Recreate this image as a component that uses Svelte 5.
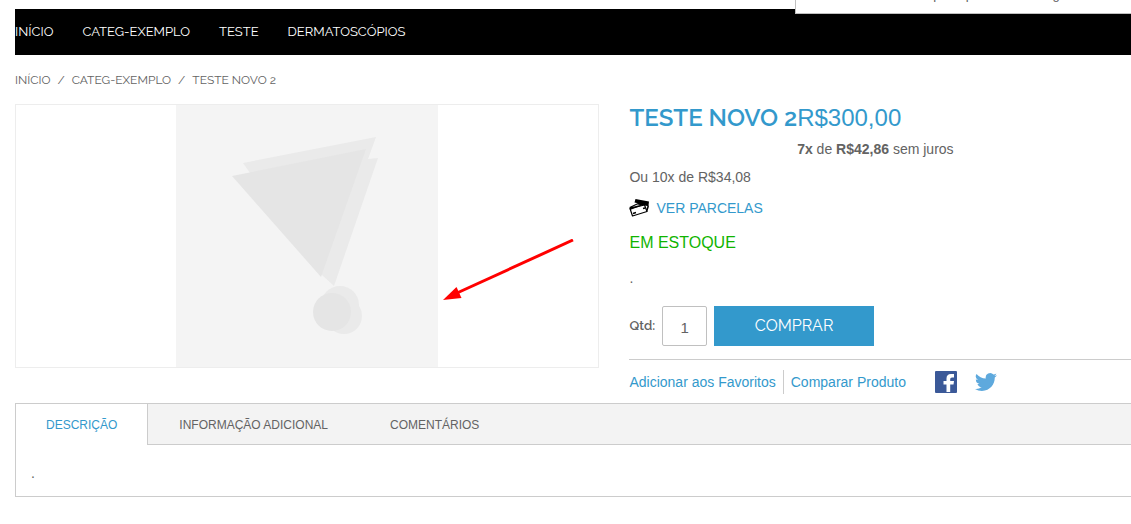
<script>
  const navLinks = ['Início', 'Categ-Exemplo', 'Teste', 'Dermatoscópios'];
  const tabs = ['Descrição', 'Informação Adicional', 'Comentários'];

  let activeTab = $state(0);
  let qty = $state('1');
</script>

<div class="page">
  <div class="notice">Sua sessão expirou por falta de carga</div>

  <nav class="main-nav">
    {#each navLinks as link}
      <a href="#top">{link}</a>
    {/each}
  </nav>

  <ul class="breadcrumbs">
    <li><a href="#top">Início</a></li>
    <li><a href="#top">Categ-Exemplo</a></li>
    <li>Teste Novo 2</li>
  </ul>

  <main class="product">
    <div class="gallery">
      <svg class="placeholder" viewBox="0 0 262 262" role="img" aria-label="Teste Novo 2">
        <rect width="262" height="262" fill="#f4f4f4" />
        <path d="M67 58 200 32 192 54 202 53 158 181 146 170Z" fill="#eaeaea" />
        <path d="M56 71 190 44 145 172Z" fill="#e5e5e5" />
        <circle cx="164" cy="200" r="19" fill="#eaeaea" />
        <circle cx="168" cy="211" r="18" fill="#eaeaea" />
        <circle cx="156" cy="207" r="19" fill="#e5e5e5" />
      </svg>
      <svg class="arrow" viewBox="0 0 132 62" aria-hidden="true">
        <path d="M130 1 14 54" stroke="#f00" stroke-width="3" />
        <path d="M0 61 13.500 48 18.500 59Z" fill="#f00" />
      </svg>
    </div>

    <section class="details">
      <div class="heading">
        <h1>Teste Novo 2</h1>
        <div class="price-box">
          <div class="price">R$300,00</div>
          <p><strong>7x</strong> de <strong>R$42,86</strong> sem juros</p>
        </div>
      </div>

      <p class="alternative">Ou 10x de R$34,08</p>

      <a class="installments" href="#parcelas">
        <svg viewBox="0 0 20 18" aria-hidden="true">
          <path d="M6.500 0 20 2.500 19.500 6.500 5.500 3.500Z" fill="#000" />
          <path d="M9 5 17.500 6Q19.500 6.500 19 8L17.500 12.500" fill="none" stroke="#000" stroke-width="1.500" />
          <path d="M1 9.500 15.500 6 18 12.500 3.500 17Z" fill="#fff" stroke="#000" stroke-width="1.200" stroke-linejoin="round" />
          <path d="M.5 8 10 3.500 15.500 5.500 1 11Z" fill="#000" />
          <path d="M3 8 8.500 5.500 11 6Z" fill="#fff" />
          <path d="M4 14.500 7 13.500M14 9.500l2-.500" stroke="#000" stroke-width="1.400" />
        </svg>
        Ver parcelas
      </a>

      <p class="stock">Em estoque</p>
      <p class="summary">.</p>

      <form class="buy" onsubmit={(e) => e.preventDefault()}>
        <label for="qty">Qtd:</label>
        <input id="qty" type="text" bind:value={qty} />
        <button type="submit">Comprar</button>
      </form>

      <div class="sharing">
        <a href="#favoritos">Adicionar aos Favoritos</a>
        <a class="compare" href="#comparar">Comparar Produto</a>
        <a class="social" href="#facebook" aria-label="Facebook">
          <svg viewBox="0 0 22 22">
            <rect width="22" height="22" rx="1" fill="#3b5998" />
            <path d="M11.500 21V13.500H8.500V10H11.500V7.500Q11.500 3 16 3H19V6.500H17Q15.200 6.500 15.200 8V10H19L18.500 13.500H15.200V21Z" fill="#fff" />
          </svg>
        </a>
        <a class="social" href="#twitter" aria-label="Twitter">
          <svg viewBox="0 0 24 24">
            <path fill="#5ea9dd" d="M23.950 4.570a10 10 0 0 1-2.820.770 4.960 4.960 0 0 0 2.160-2.720c-.950.560-2 .960-3.130 1.180a4.920 4.920 0 0 0-8.380 4.480C7.690 8.090 4.070 6.130 1.640 3.160a4.920 4.920 0 0 0 1.520 6.570 4.900 4.900 0 0 1-2.230-.610v.060a4.920 4.920 0 0 0 3.950 4.830 5 5 0 0 1-2.210.080 4.940 4.940 0 0 0 4.600 3.420A9.870 9.870 0 0 1 0 19.540a14 14 0 0 0 7.550 2.210c9.050 0 14-7.500 14-13.980l-.020-.630a9.940 9.940 0 0 0 2.420-2.570z" />
          </svg>
        </a>
      </div>
    </section>
  </main>

  <section class="collateral">
    <div class="tabs" role="tablist">
      {#each tabs as tab, i}
        <button role="tab" aria-selected={activeTab === i} class:active={activeTab === i} onclick={() => (activeTab = i)}>
          {tab}
        </button>
      {/each}
    </div>
    <div class="tab-content" role="tabpanel">.</div>
  </section>
</div>

<style>
  :global(body) {
    margin: 0;
    background: #fff;
    overflow-x: hidden;
  }

  .page {
    position: relative;
    padding: 9px 0 27px 15px;
    font-family: 'Liberation Sans', Arial, sans-serif;
    font-size: 14px;
    line-height: 20px;
    color: #636363;
  }

  h1, p, ul {
    margin: 0;
    padding: 0;
  }

  a {
    color: #3399cc;
    text-decoration: none;
  }

  /* Bottom edge of the message box that hangs over the menu */
  .notice {
    position: absolute;
    top: -30px;
    left: 795px;
    right: 0;
    height: 44px;
    box-sizing: border-box;
    padding: 16px 0 0 52px;
    border: 1px solid #c0c0c0;
    border-right: 0;
    background: #fff;
    font-size: 13px;
    line-height: 16px;
    white-space: nowrap;
  }

  .main-nav {
    display: flex;
    gap: 29px;
    background: #000;
    font-family: Raleway, Lato, sans-serif;
    font-size: 13px;
    line-height: 46px;
    text-transform: uppercase;
  }

  .main-nav a {
    color: #fff;
  }

  .breadcrumbs {
    display: flex;
    padding: 15px 0 14px;
    list-style: none;
    font-family: Raleway, Lato, sans-serif;
    font-size: 12px;
    text-transform: uppercase;
  }

  .breadcrumbs a {
    color: #636363;
  }

  .breadcrumbs li + li::before {
    content: '/';
    margin: 0 7px;
  }

  .product {
    display: grid;
    grid-template-columns: 585fr 502fr;
    column-gap: 30px;
    align-items: start;
  }

  .gallery {
    position: relative;
    display: flex;
    justify-content: center;
    border: 1px solid #ededed;
  }

  .placeholder {
    width: 262px;
    height: 262px;
  }

  .arrow {
    position: absolute;
    left: calc(50% + 136px);
    top: 134px;
    width: 132px;
    height: 62px;
  }

  .heading {
    display: flex;
  }

  h1 {
    font-family: Raleway, Lato, sans-serif;
    font-size: 24px;
    font-weight: 600;
    line-height: 28px;
    color: #3399cc;
    text-transform: uppercase;
  }

  .price {
    margin-bottom: 7px;
    font-size: 24px;
    line-height: 28px;
    color: #3399cc;
  }

  .alternative {
    margin-top: 8px;
  }

  .installments {
    display: flex;
    align-items: center;
    gap: 7px;
    margin-top: 11px;
    text-transform: uppercase;
  }

  .installments svg {
    width: 20px;
    height: 20px;
  }

  .stock {
    margin-top: 15px;
    font-size: 16px;
    color: #11b400;
    text-transform: uppercase;
  }

  .summary {
    margin-top: 15px;
  }

  .buy {
    display: flex;
    align-items: center;
    margin-top: 18px;
    padding-bottom: 13px;
    border-bottom: 1px solid #cccccc;
  }

  .buy label {
    font-family: Raleway, Lato, sans-serif;
    font-size: 13px;
    font-weight: 600;
  }

  .buy input {
    box-sizing: border-box;
    width: 45px;
    height: 40px;
    margin: 0 7px;
    padding: 2px 0 0;
    border: 1px solid #c0c0c0;
    border-radius: 2px;
    font-family: 'Liberation Sans', Arial, sans-serif;
    font-size: 15px;
    text-align: center;
    color: #636363;
  }

  .buy button {
    width: 160px;
    height: 40px;
    padding: 0 0 2px;
    border: 0;
    background: #3399cc;
    color: #fff;
    font-family: Raleway, Lato, sans-serif;
    font-size: 16px;
    text-transform: uppercase;
  }

  .sharing {
    display: flex;
    align-items: center;
    height: 43px;
  }

  .compare {
    margin-left: 7px;
    padding: 2px 0 2px 7px;
    border-left: 1px solid #cccccc;
  }

  .social {
    display: flex;
    margin-left: 18px;
  }

  .compare + .social {
    margin-left: 29px;
  }

  .social svg {
    width: 22px;
    height: 22px;
  }

  .collateral {
    border: 1px solid #cccccc;
    border-right: 0;
  }

  .tabs {
    display: flex;
    background: #f3f3f3;
    box-shadow: inset 0 -1px #cccccc;
  }

  .tabs button {
    height: 41px;
    padding: 0 31px;
    border: 0;
    background: none;
    color: #636363;
    font-family: 'Liberation Sans', Arial, sans-serif;
    font-size: 12px;
    text-transform: uppercase;
  }

  .tabs button.active {
    padding: 0 30px;
    border-right: 1px solid #cccccc;
    background: #fff;
    color: #3399cc;
  }

  .tab-content {
    padding: 18px 15px 13px;
  }
</style>
